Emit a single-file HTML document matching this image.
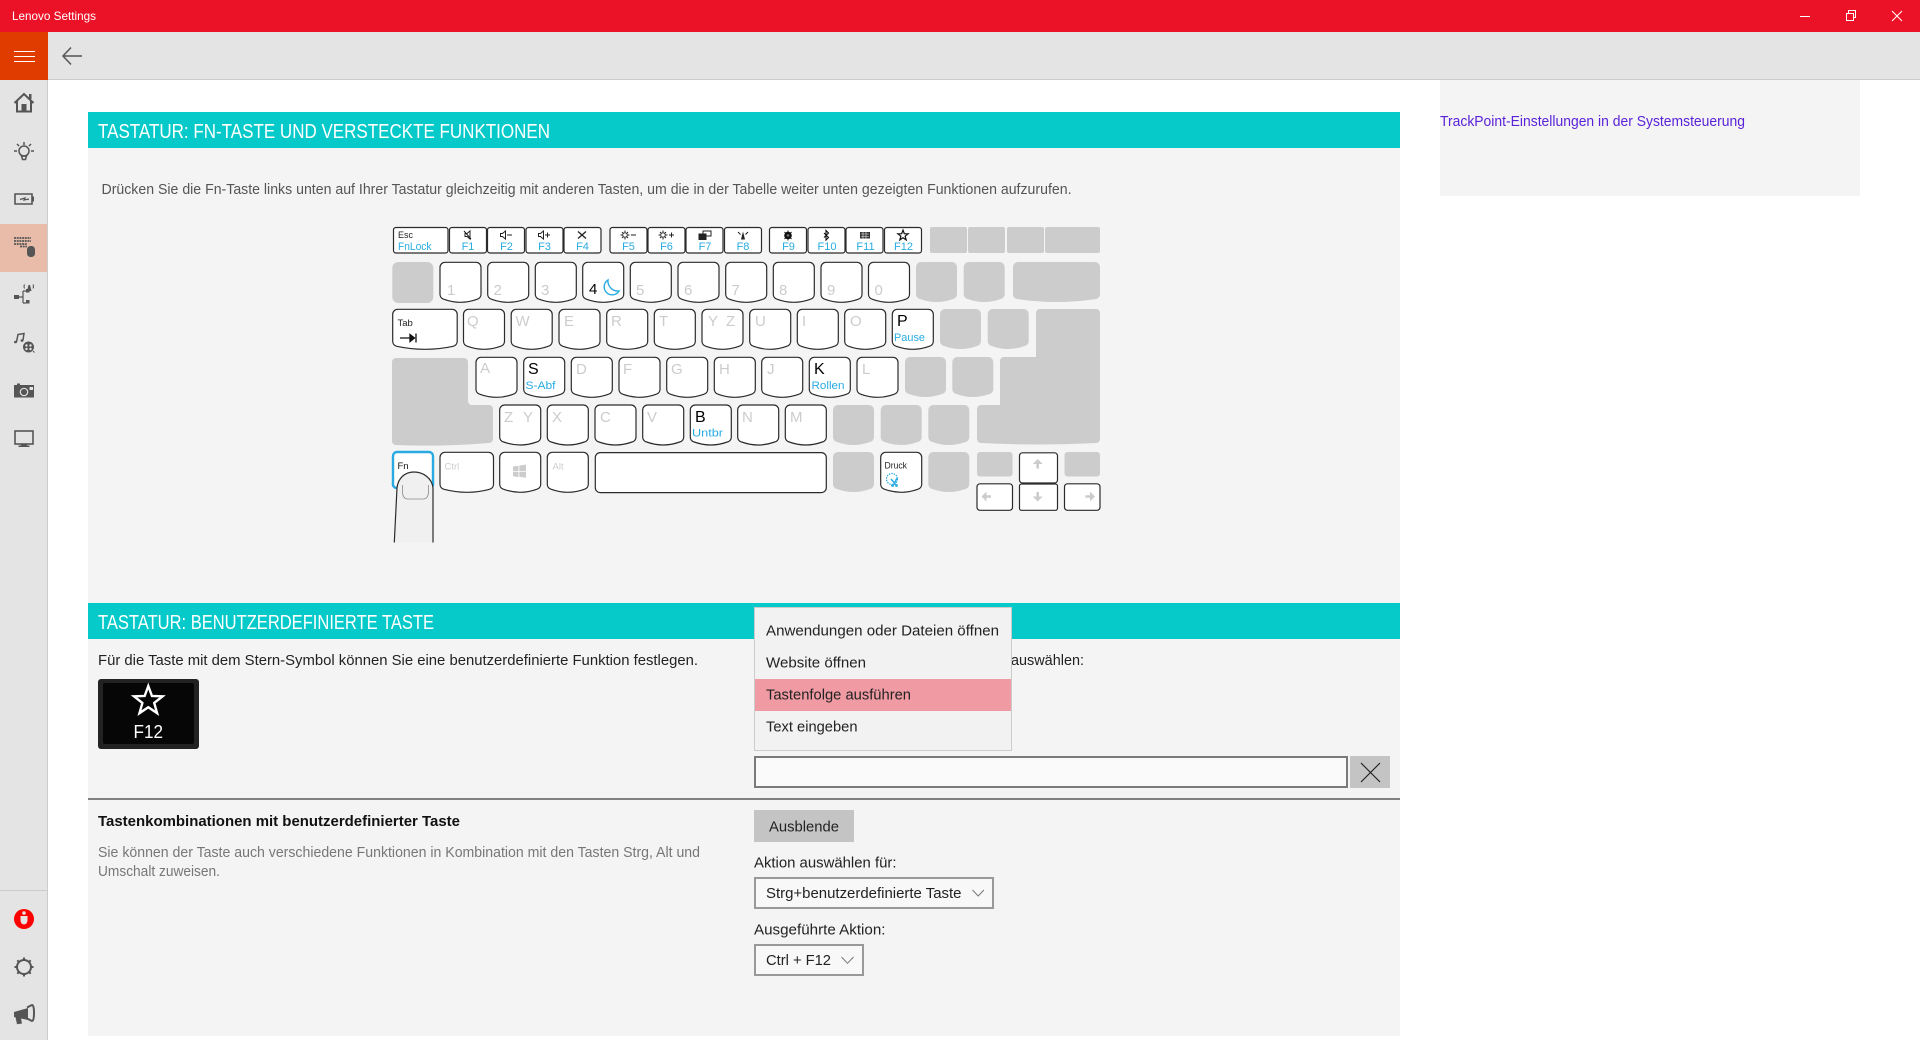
<!DOCTYPE html>
<html lang="de">
<head>
<meta charset="utf-8">
<title>Lenovo Settings</title>
<style>
html,body{margin:0;padding:0;background:#fff;overflow:hidden}
svg{display:block;font-family:"Liberation Sans",sans-serif}
.k{fill:#fff;stroke:#2b2b2b;stroke-width:1.2}
.g{fill:#ccc}
.l{fill:#ccc;font-size:15px}
.b{fill:#000;font-size:16px}
.c{fill:#29abe2;font-size:11px}
.fn{fill:#29abe2;font-size:11px;text-anchor:middle}
.s{font-size:15px;fill:#222}
.ic{fill:none;stroke:#555;stroke-width:1.5}
.sm{fill:none;stroke:#222;stroke-width:1}
</style>
</head>
<body>
<svg width="1920" height="1040" viewBox="0 0 1920 1040" xmlns="http://www.w3.org/2000/svg">
<defs>
<path id="kp" d="M5 0h31a5 5 0 0 1 5 5v27a5 5 0 0 1-4 5q-16.500 6-33 0a5 5 0 0 1-4-5v-27a5 5 0 0 1 5-5z"/>
<path id="st" d="M0-15L3.640-5.020 14.270-4.640 5.900 1.920 8.820 12.140 0 6.200-8.820 12.140-5.900 1.920-14.270-4.640-3.640-5.020Z"/>
</defs>

<!-- chrome -->
<rect width="1920" height="32" fill="#eb1227"/>
<text x="12" y="20" font-size="12" fill="#fff" textLength="84" lengthAdjust="spacingAndGlyphs">Lenovo Settings</text>
<path d="M1800 16.500h10" stroke="#fff" fill="none"/>
<path d="M1846.500 13.500h7v7h-7zM1848.500 13v-2.500h7v7h-2" stroke="#fff" fill="none"/>
<path d="M1892 11l10 10M1902 11l-10 10" stroke="#fff" fill="none"/>

<rect y="32" width="1920" height="47" fill="#e4e4e4"/>
<rect y="79" width="1920" height="1" fill="#ccc"/>
<rect y="32" width="48" height="48" fill="#e03c00"/>
<path d="M14 51.500h21M14 56.500h21M14 61.500h21" stroke="#fff" fill="none"/>
<path d="M82 56H63M71 47.500L63 56l8 8.500" fill="none" stroke="#555" stroke-width="1.500"/>

<!-- sidebar -->
<rect y="80" width="47" height="960" fill="#e4e4e4"/>
<rect x="47" y="80" width="1" height="960" fill="#ccc"/>
<rect y="224" width="47" height="48" fill="#e8bca8"/>
<rect y="890" width="47" height="1" fill="#ccc"/>

<!-- home -->
<g transform="translate(0 -1)">
<path d="M14.500 104L24 95l9.500 9M17 102v10.500h14V102" fill="none" stroke="#555" stroke-width="2"/>
<rect x="21.500" y="105" width="5" height="7" fill="#555"/>
<rect x="29" y="95" width="2.500" height="5" fill="#555"/>
</g>
<!-- bulb -->
<g transform="translate(0 -1)">
<circle cx="24" cy="152" r="5" class="ic"/>
<path d="M21.500 157h5l-1 3.500h-3zM24 143v3M14 152h3M31 152h3M17 145l2 2M31 145l-2 2" fill="none" stroke="#555" stroke-width="1.500"/>
</g>
<!-- battery -->
<path d="M15 194h17v10H15z" fill="none" stroke="#555" stroke-width="1.600"/>
<rect x="32" y="196.500" width="2" height="5" fill="#555"/>
<path d="M20 199.500l5-1.500-1 2 5-1" fill="none" stroke="#555" stroke-width="1.200"/>
<!-- keyboard + mouse -->
<path d="M14 238h17M14 241h17M14 244h13M20 246.500h7" stroke="#555" stroke-width="1.800" stroke-dasharray="2 .7" fill="none"/>
<rect x="27" y="246" width="8" height="11" rx="3.500" fill="#555"/>
<!-- network -->
<g transform="translate(0 -2)">
<rect x="14" y="297" width="5" height="4" fill="#555"/>
<path d="M19 299h4M23 293v12M23 293h3M23 305h3" stroke="#555" fill="none" stroke-width="1.200"/>
<rect x="26" y="291" width="3.500" height="3.500" fill="#555"/>
<rect x="26" y="302" width="3.500" height="3.500" fill="#555"/>
<path d="M27 293l1.500-6 1.500 0 1.500 6z" fill="#555"/>
<path d="M24.500 286.500q-1 2 0 4M33 286.500q1 2 0 4" stroke="#555" fill="none"/>
</g>
<!-- music/film -->
<path d="M16.500 342l1.500-7.500 6-1-1 6.500" fill="none" stroke="#555" stroke-width="1.500"/>
<ellipse cx="15.500" cy="342" rx="1.500" ry="1.300" fill="#555"/>
<ellipse cx="22" cy="340.500" rx="1.500" ry="1.300" fill="#555"/>
<circle cx="28.500" cy="347" r="5.500" fill="#555"/>
<circle cx="26.500" cy="345.500" r="1.200" fill="#e4e4e4"/><circle cx="30.500" cy="345.500" r="1.200" fill="#e4e4e4"/><circle cx="26.500" cy="349" r="1.200" fill="#e4e4e4"/><circle cx="30.500" cy="349" r="1.200" fill="#e4e4e4"/>
<path d="M33 351l1.500 1.500" stroke="#555"/>
<!-- camera -->
<path d="M14 385h3v-1.500h3v1.500h14v12.500H14z" fill="#555"/>
<circle cx="24" cy="392" r="3.700" fill="#555" stroke="#e4e4e4" stroke-width="1.200"/>
<rect x="29.500" y="387" width="3.500" height="3" fill="#e4e4e4"/>
<!-- monitor -->
<rect x="15" y="431" width="18" height="13" fill="none" stroke="#555" stroke-width="1.600"/>
<path d="M21 444h6v1.500h2.500v1.500h-11v-1.500H21z" fill="#555"/>
<!-- info -->
<circle cx="24" cy="919" r="10" fill="#f00"/>
<circle cx="24" cy="913" r="1.800" fill="#e4e4e4"/>
<path d="M20.500 916h7v4c0 2.500-1.500 4.500-3.500 4.500s-3.500-2-3.500-4.500z" fill="#e4e4e4"/>
<!-- gear -->
<circle cx="24" cy="967" r="7" fill="none" stroke="#555" stroke-width="2"/>
<path d="M24 957.500v3M24 973.500v3M14.500 967h3M30.500 967h3M17.300 960.300l2 2M28.700 971.700l2 2M17.300 973.700l2-2M28.700 962.300l2-2" stroke="#555" stroke-width="2" fill="none"/>
<!-- megaphone -->
<path d="M14 1012l14-4v12l-7-1.500 1 5-5 .8-1.500-7-1.500-.3z" fill="#555"/>
<path d="M27 1007.500l5-2.500q2 0 2 8t-2 8l-5-2.500" fill="none" stroke="#555" stroke-width="2"/>

<!-- right panel -->
<rect x="1440" y="80" width="420" height="116" fill="#f4f4f4"/>
<text x="1440" y="126" font-size="15" fill="#5a22d8" textLength="305" lengthAdjust="spacingAndGlyphs">TrackPoint-Einstellungen in der Systemsteuerung</text>

<!-- main panel -->
<rect x="88" y="112" width="1312" height="924" fill="#f4f4f4"/>
<rect x="88" y="112" width="1312" height="36" fill="#06caca"/>
<text x="98" y="138" font-size="20" fill="#fff" textLength="452" lengthAdjust="spacingAndGlyphs">TASTATUR: FN-TASTE UND VERSTECKTE FUNKTIONEN</text>
<text x="101.500" y="194" font-size="14.500" fill="#555" textLength="970" lengthAdjust="spacingAndGlyphs">Drücken Sie die Fn-Taste links unten auf Ihrer Tastatur gleichzeitig mit anderen Tasten, um die in der Tabelle weiter unten gezeigten Funktionen aufzurufen.</text>

<!-- keyboard: F row -->
<g class="k">
<rect x="393.500" y="227.500" width="54.500" height="25.500" rx="2.500"/>
<rect x="449.500" y="227.500" width="37" height="25.500" rx="2.500"/>
<rect x="487.500" y="227.500" width="37" height="25.500" rx="2.500"/>
<rect x="526" y="227.500" width="37" height="25.500" rx="2.500"/>
<rect x="564" y="227.500" width="37" height="25.500" rx="2.500"/>
<rect x="610" y="227.500" width="37" height="25.500" rx="2.500"/>
<rect x="648" y="227.500" width="37" height="25.500" rx="2.500"/>
<rect x="686" y="227.500" width="37" height="25.500" rx="2.500"/>
<rect x="724.500" y="227.500" width="37" height="25.500" rx="2.500"/>
<rect x="769.500" y="227.500" width="37" height="25.500" rx="2.500"/>
<rect x="808" y="227.500" width="37" height="25.500" rx="2.500"/>
<rect x="846" y="227.500" width="37" height="25.500" rx="2.500"/>
<rect x="884.500" y="227.500" width="37" height="25.500" rx="2.500"/>
</g>
<g class="g">
<rect x="930" y="227" width="37" height="26" rx="2"/>
<rect x="968" y="227" width="37" height="26" rx="2"/>
<rect x="1007" y="227" width="37" height="26" rx="2"/>
<rect x="1045" y="227" width="55" height="26" rx="2"/>
</g>
<text x="398" y="238" font-size="9" fill="#222">Esc</text>
<text x="398" y="250" class="c" textLength="33.500" lengthAdjust="spacingAndGlyphs">FnLock</text>
<text x="468" y="250" class="fn">F1</text><text x="506.500" y="250" class="fn">F2</text><text x="544.500" y="250" class="fn">F3</text><text x="582.500" y="250" class="fn">F4</text>
<text x="628.500" y="250" class="fn">F5</text><text x="666.500" y="250" class="fn">F6</text><text x="705" y="250" class="fn">F7</text><text x="743" y="250" class="fn">F8</text>
<text x="788.500" y="250" class="fn">F9</text><text x="827" y="250" class="fn">F10</text><text x="865.500" y="250" class="fn">F11</text><text x="903.500" y="250" class="fn">F12</text>
<!-- F row icons -->
<g class="sm">
<path d="M465 233.500h2l3-2.500v8l-3-2.500h-2z"/><path d="M464 231l7 8"/>
<path d="M500.500 233.500h2l3-2.500v8l-3-2.500h-2zM507 235h5"/>
<path d="M538.500 233.500h2l3-2.500v8l-3-2.500h-2zM545 235h5M547.500 232.500v5"/>
<path d="M578 231.500l8 7M586 231.500l-8 7" stroke-width="1.300"/>
<circle cx="625" cy="235" r="2.300"/><path d="M625 230.500v1.500M625 238v1.500M620.500 235h1.500M628 235h1.500M622 232l1 1M627 237l1 1M628 232l-1 1M623 237l-1 1M631 235h5"/>
<circle cx="663" cy="235" r="2.300"/><path d="M663 230.500v1.500M663 238v1.500M658.500 235h1.500M666 235h1.500M660 232l1 1M665 237l1 1M666 232l-1 1M661 237l-1 1M669 235h5M671.500 232.500v5"/>
<rect x="699" y="234" width="7" height="5.500" fill="#222"/><path d="M703 234v-3h8v5h-5"/>
<path d="M738 232l2.500 2.500M748 232l-2.500 2.500"/>
</g>
<path d="M741 239.500l2-8 2 8z" fill="#222"/>
<circle cx="788" cy="235.500" r="3.800" fill="#111"/><circle cx="788" cy="235.500" r="1.200" fill="#f4f4f4"/>
<path d="M788 230.500v10M785.500 233l-1-1M790.500 233l1-1M785.500 238l-1 1M790.500 238l1 1" stroke="#111" fill="none"/>
<path d="M824 233l4.500 4.500-2.500 2.500v-9.500l2.500 2.500-4.500 4.500" fill="none" stroke="#111" stroke-width="1.100"/>
<rect x="860" y="232" width="10" height="6.500" fill="#333"/>
<path d="M861 234h8M861 236.500h8M863 232v6.500M866 232v6.500" stroke="#eee" stroke-width=".6" fill="none"/>
<use href="#st" transform="translate(903 235.500) scale(.36)" fill="none" stroke="#111" stroke-width="3.400"/>

<!-- row 1 -->
<rect x="392.300" y="262" width="41" height="41" rx="6" class="g"/>
<g class="k">
<use href="#kp" x="440" y="262.300"/><use href="#kp" x="487.700" y="262.300"/><use href="#kp" x="535.300" y="262.300"/><use href="#kp" x="582.700" y="262.300"/><use href="#kp" x="630.300" y="262.300"/><use href="#kp" x="678" y="262.300"/><use href="#kp" x="725.700" y="262.300"/><use href="#kp" x="773.300" y="262.300"/><use href="#kp" x="821" y="262.300"/><use href="#kp" x="868.500" y="262.300"/>
</g>
<g class="g"><use href="#kp" x="916" y="262"/><use href="#kp" x="963.700" y="262"/>
<path d="M1017 262h78a5 5 0 0 1 5 5v27a5 5 0 0 1-4 5q-40 6-79 0a5 5 0 0 1-4-5v-27a5 5 0 0 1 5-5z"/></g>
<text x="447" y="295" class="l">1</text><text x="493.500" y="295" class="l">2</text><text x="541" y="295" class="l">3</text><text x="589" y="294" font-size="15" fill="#000">4</text><text x="636" y="295" class="l">5</text><text x="684" y="295" class="l">6</text><text x="731.500" y="295" class="l">7</text><text x="779" y="295" class="l">8</text><text x="827" y="295" class="l">9</text><text x="874.500" y="295" class="l">0</text>
<path d="M608 280a8 8 0 1 0 11 11a10 10 0 0 1-11-11z" fill="none" stroke="#29abe2" stroke-width="1.400"/>

<!-- row 2 -->
<path class="k" d="M397.700 309.300h54.500a5 5 0 0 1 5 5v27a5 5 0 0 1-4 5q-28 6-56.500 0a5 5 0 0 1-4-5v-27a5 5 0 0 1 5-5z"/>
<g class="k">
<use href="#kp" x="463.500" y="309.300"/><use href="#kp" x="511.200" y="309.300"/><use href="#kp" x="559" y="309.300"/><use href="#kp" x="606.700" y="309.300"/><use href="#kp" x="654.300" y="309.300"/><use href="#kp" x="702" y="309.300"/><use href="#kp" x="749.700" y="309.300"/><use href="#kp" x="797.300" y="309.300"/><use href="#kp" x="844.700" y="309.300"/><use href="#kp" x="892.300" y="309.300"/>
</g>
<g class="g"><use href="#kp" x="940" y="309"/><use href="#kp" x="987.700" y="309"/></g>
<path class="g" d="M1040 309h56a4 4 0 0 1 4 4v126a4 4 0 0 1-4 4q-60 3-115 0a4 4 0 0 1-4-4v-30a4 4 0 0 1 4-4h19v-44a4 4 0 0 1 4-4h32v-44a4 4 0 0 1 4-4z"/>
<text x="397.500" y="326" font-size="9.500" fill="#222">Tab</text>
<path d="M400 338h14M410 334.500l4.500 3.500-4.500 3.500zM416 333.500v9" stroke="#111" stroke-width="1.300" fill="#111"/>
<text x="467" y="326" class="l">Q</text><text x="515.500" y="326" class="l">W</text><text x="564" y="326" class="l">E</text><text x="611" y="326" class="l">R</text><text x="659" y="326" class="l">T</text><text x="708" y="326" class="l">Y</text><text x="726" y="326" class="l">Z</text><text x="755" y="326" class="l">U</text><text x="802" y="326" class="l">I</text><text x="850" y="326" class="l">O</text>
<text x="897" y="326" class="b">P</text>
<text x="894" y="341" class="c" textLength="31" lengthAdjust="spacingAndGlyphs">Pause</text>

<!-- row 3 -->
<path class="g" d="M396 358h68a4 4 0 0 1 4 4v39a4 4 0 0 0 4 4h17a4 4 0 0 1 4 4v30a4 4 0 0 1-4 4q-48 4-93 2a4 4 0 0 1-4-4V362a4 4 0 0 1 4-4z"/>
<g class="k">
<use href="#kp" x="476" y="357.300"/><use href="#kp" x="523.700" y="357.300"/><use href="#kp" x="571.300" y="357.300"/><use href="#kp" x="619" y="357.300"/><use href="#kp" x="666.700" y="357.300"/><use href="#kp" x="714.300" y="357.300"/><use href="#kp" x="761.700" y="357.300"/><use href="#kp" x="809.300" y="357.300"/><use href="#kp" x="857" y="357.300"/>
</g>
<g class="g"><use href="#kp" x="905" y="357"/><use href="#kp" x="952.300" y="357"/></g>
<text x="480" y="373" class="l">A</text><text x="576" y="374" class="l">D</text><text x="623" y="374" class="l">F</text><text x="671" y="374" class="l">G</text><text x="719" y="374" class="l">H</text><text x="767" y="374" class="l">J</text><text x="862" y="374" class="l">L</text>
<text x="528" y="374" class="b">S</text><text x="525.500" y="389" class="c" textLength="30" lengthAdjust="spacingAndGlyphs">S-Abf</text>
<text x="814" y="374" class="b">K</text><text x="811.500" y="389" class="c" textLength="33" lengthAdjust="spacingAndGlyphs">Rollen</text>

<!-- row 4 -->
<g class="k">
<use href="#kp" x="499.700" y="405"/><use href="#kp" x="547.300" y="405"/><use href="#kp" x="595" y="405"/><use href="#kp" x="642.700" y="405"/><use href="#kp" x="690.300" y="405"/><use href="#kp" x="737.700" y="405"/><use href="#kp" x="785.300" y="405"/>
</g>
<g class="g"><use href="#kp" x="833" y="405"/><use href="#kp" x="880.700" y="405"/><use href="#kp" x="928.300" y="405"/></g>
<text x="504" y="422" class="l">Z</text><text x="523" y="422" class="l">Y</text><text x="552" y="422" class="l">X</text><text x="600" y="422" class="l">C</text><text x="647" y="422" class="l">V</text><text x="742" y="422" class="l">N</text><text x="790" y="422" class="l">M</text>
<text x="695" y="422" class="b">B</text><text x="692" y="436.500" class="c" textLength="31" lengthAdjust="spacingAndGlyphs">Untbr</text>

<!-- row 5 -->
<path d="M397 452h32a4 4 0 0 1 4 4v27a4 4 0 0 1-4 5q-16 3-32 0a4 4 0 0 1-4-5v-27a4 4 0 0 1 4-4z" fill="#fff" stroke="#29abe2" stroke-width="2.400"/>
<path class="k" d="M445 452.300h43.500a5 5 0 0 1 5 5v27a5 5 0 0 1-4 5q-22 6-45.500 0a5 5 0 0 1-4-5v-27a5 5 0 0 1 5-5z"/>
<use href="#kp" x="499.700" y="452.300" class="k"/>
<use href="#kp" x="547.300" y="452.300" class="k"/>
<path class="k" d="M600.300 452.600h221a5 5 0 0 1 5 5v30a5 5 0 0 1-5 5h-221a5 5 0 0 1-5-5v-30a5 5 0 0 1 5-5z"/>
<g class="g"><use href="#kp" x="833" y="452"/><use href="#kp" x="928.300" y="452"/></g>
<use href="#kp" x="880.700" y="452.300" class="k"/>
<rect x="977" y="452" width="35.500" height="24.500" rx="3" class="g"/>
<rect x="1064.500" y="452" width="35.500" height="24.500" rx="3" class="g"/>
<g class="k">
<rect x="1019.500" y="452.800" width="38" height="30.200" rx="3"/>
<rect x="977" y="483.800" width="35.500" height="26.500" rx="3"/>
<rect x="1019.500" y="484" width="38" height="26.300" rx="2"/>
<rect x="1064.500" y="483.800" width="35.500" height="26.500" rx="3"/>
</g>
<text x="397.500" y="469" font-size="9.500" fill="#111">Fn</text>
<text x="444.500" y="469.500" font-size="9.500" fill="#ccc">Ctrl</text>
<text x="552.500" y="469.500" font-size="9.500" fill="#ccc">Alt</text>
<text x="884.500" y="468.500" font-size="9" fill="#222" textLength="22.500" lengthAdjust="spacingAndGlyphs">Druck</text>
<path d="M513 466.500l5.500-.8v5.300H513zM519.300 465.600l6.700-1v6.400h-6.700zM513 471.800h5.500v5.300l-5.500-.8zM519.300 471.800h6.700v6l-6.700-1z" fill="#ccc"/>
<circle cx="892" cy="479" r="5.500" fill="none" stroke="#29abe2" stroke-width="1.200" stroke-dasharray="1.500 1"/>
<path d="M891 479l5.500 6.500M897 478l-4 8" stroke="#29abe2" stroke-width="1.400" fill="none"/>
<circle cx="892.500" cy="485.500" r="1.400" fill="#29abe2"/><circle cx="896.500" cy="485.500" r="1.400" fill="#29abe2"/>
<!-- arrows -->
<path d="M1037.700 459l-5 5h3.700v4.500h2.600V464h3.700z" fill="#ccc"/>
<path d="M981.500 496.500l5-5v3.700h4.500v2.600h-4.500v3.700z" fill="#ccc"/>
<path d="M1037.700 501.500l-5-5h3.700V492h2.600v4.500h3.700z" fill="#ccc"/>
<path d="M1095 496.500l-5-5v3.700h-4.500v2.600h4.500v3.700z" fill="#ccc"/>
<!-- finger -->
<path d="M394.300 542.500L397 488c1-10 8-16 17-16s18 6 19 16v54.500" fill="#f0f0f0" stroke="#2b2b2b" stroke-width="1.200"/>
<path d="M402.500 485v7c0 4 2 7 5 7h16c3 0 5-3 5-7v-7" fill="none" stroke="#8a8a8a" stroke-width=".8"/>
<rect x="392" y="543" width="45" height="4" fill="#f4f4f4"/>

<!-- second section -->
<rect x="88" y="603" width="1312" height="36" fill="#06caca"/>
<text x="98" y="629" font-size="20" fill="#fff" textLength="336" lengthAdjust="spacingAndGlyphs">TASTATUR: BENUTZERDEFINIERTE TASTE</text>
<text x="98" y="665" class="s" textLength="600" lengthAdjust="spacingAndGlyphs">Für die Taste mit dem Stern-Symbol können Sie eine benutzerdefinierte Funktion festlegen.</text>
<text x="1011" y="665" class="s" textLength="73" lengthAdjust="spacingAndGlyphs">auswählen:</text>

<rect x="98" y="679" width="101" height="70" rx="3" fill="#222"/>
<rect x="103" y="683" width="91" height="61" rx="2" fill="#060606"/>
<use href="#st" transform="translate(148.300 701)" fill="none" stroke="#fff" stroke-width="2.400"/>
<text x="133.500" y="738" font-size="18" fill="#fff" textLength="29.500" lengthAdjust="spacingAndGlyphs">F12</text>

<rect x="88" y="798" width="1312" height="2" fill="#808080"/>
<text x="98" y="826" font-size="15" font-weight="700" fill="#111" textLength="362" lengthAdjust="spacingAndGlyphs">Tastenkombinationen mit benutzerdefinierter Taste</text>
<text x="98" y="857" font-size="15" fill="#777" textLength="602" lengthAdjust="spacingAndGlyphs">Sie können der Taste auch verschiedene Funktionen in Kombination mit den Tasten Strg, Alt und</text>
<text x="98" y="876" font-size="15" fill="#777" textLength="122" lengthAdjust="spacingAndGlyphs">Umschalt zuweisen.</text>

<!-- text input -->
<rect x="755" y="757" width="592" height="30" fill="#fafafa" stroke="#7a7a7a" stroke-width="2"/>
<rect x="1350" y="756" width="40" height="32" fill="#c4c4c4"/>
<path d="M1361 763l19 19M1380 763l-19 19" stroke="#222" stroke-width="1.200" fill="none"/>

<!-- menu -->
<rect x="754.500" y="607.500" width="257" height="143" fill="#f2f2f2" stroke="#ccc"/>
<rect x="755" y="679" width="256" height="32" fill="#f09aa3"/>
<text x="766" y="635.500" class="s" textLength="233" lengthAdjust="spacingAndGlyphs">Anwendungen oder Dateien öffnen</text>
<text x="766" y="667.500" class="s" textLength="100" lengthAdjust="spacingAndGlyphs">Website öffnen</text>
<text x="766" y="699.500" class="s" textLength="145" lengthAdjust="spacingAndGlyphs">Tastenfolge ausführen</text>
<text x="766" y="731.500" class="s" textLength="91.500" lengthAdjust="spacingAndGlyphs">Text eingeben</text>

<!-- controls -->
<rect x="754" y="810" width="100" height="32" fill="#c4c4c4"/>
<text x="769" y="831.500" class="s" textLength="70" lengthAdjust="spacingAndGlyphs">Ausblende</text>
<text x="754" y="867.500" class="s" textLength="142.500" lengthAdjust="spacingAndGlyphs">Aktion auswählen für:</text>
<rect x="755" y="878" width="238" height="30" fill="#f8f8f8" stroke="#999" stroke-width="2"/>
<text x="766" y="898" class="s" textLength="195.500" lengthAdjust="spacingAndGlyphs">Strg+benutzerdefinierte Taste</text>
<path d="M972.500 890l5.700 6 5.700-6" fill="none" stroke="#777"/>
<text x="754" y="934.500" class="s" textLength="131.500" lengthAdjust="spacingAndGlyphs">Ausgeführte Aktion:</text>
<rect x="755" y="945" width="108" height="30" fill="#f8f8f8" stroke="#999" stroke-width="2"/>
<text x="766" y="965" class="s" textLength="65" lengthAdjust="spacingAndGlyphs">Ctrl + F12</text>
<path d="M841.500 957l6 6.300 6-6.300" fill="none" stroke="#777"/>
</svg>
</body>
</html>
